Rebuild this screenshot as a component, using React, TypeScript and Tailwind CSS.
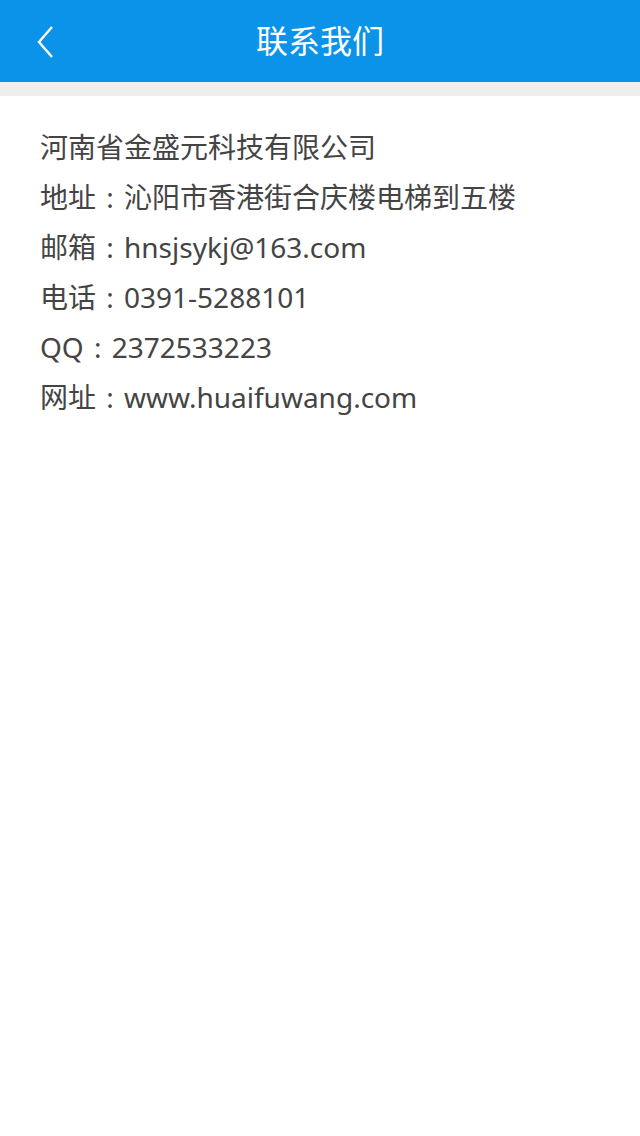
export default function App() {
  const lines: [string, string | null][] = [
    ["河南省金盛元科技有限公司", null],
    ["地址", "沁阳市香港街合庆楼电梯到五楼"],
    ["邮箱", "hnsjsykj@163.com"],
    ["电话", "0391-5288101"],
    ["QQ", "2372533223"],
    ["网址", "www.huaifuwang.com"],
  ];
  return (
    <div className="w-[640px] h-[1136px] bg-white" style={{ fontFamily: '"Noto Sans", "Noto Sans CJK SC", sans-serif' }}>
      <div className="relative h-[82px] bg-[#0b93e9] flex items-center justify-center">
        <svg className="absolute left-[34px] top-[24px]" width="24" height="36" viewBox="0 0 24 36" fill="none">
          <path d="M18 3 L5 18 L18 33" stroke="white" strokeWidth="2.4" strokeLinecap="butt" strokeLinejoin="miter" />
        </svg>
        <span className="text-white text-[32px] leading-none">联系我们</span>
      </div>
      <div className="h-[14px] bg-[#eeeeee]" />
      <div className="pt-[26px] pl-[40px] text-[#444444] text-[28px] leading-[50px]">
        {lines.map(([a, b]) => (
          <div key={a} className="h-[50px] whitespace-nowrap">
            {a}
            {b !== null && (
              <>
                <span className="inline-block w-[28px] text-center">:</span>
                {b}
              </>
            )}
          </div>
        ))}
      </div>
    </div>
  );
}
